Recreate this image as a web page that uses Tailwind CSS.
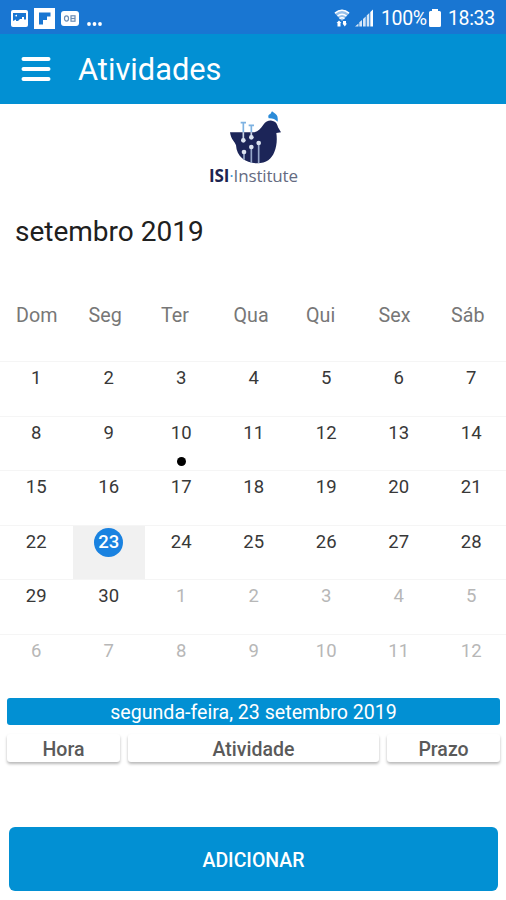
<!DOCTYPE html>
<html lang="pt">
<head>
<meta charset="utf-8">
<title>Atividades</title>
<script src="https://cdn.jsdelivr.net/npm/@tailwindcss/browser@4"></script>
</head>
<body class="w-[506px] h-[900px] overflow-hidden bg-white font-[Roboto,sans-serif] flex flex-col">
<div class="h-[34px] shrink-0 bg-[#1976d2] flex items-center justify-between pl-[11px] pr-[12px] text-white pt-[2px]">
  <div class="flex items-center">
    <svg class="w-[17px] h-[17px]" viewBox="0 0 17 17"><rect width="17" height="17" rx="2" fill="#fff"/><path d="M2 3h13v6.500h-2V7h-2v2H9L7 11H5V9.500L2 11z" fill="#1976d2"/><path d="M3.500 6L6 4.500v2z" fill="#fff"/></svg>
    <svg class="w-[21px] h-[21px] ml-[6px]" viewBox="0 0 21 21"><rect width="21" height="21" fill="#fff"/><path d="M5 4.500h11.500v4H13V12H9v4.500H5z" fill="#1976d2"/></svg>
    <svg class="w-[18px] h-[15px] ml-[6px]" viewBox="0 0 18 15"><rect width="18" height="15" rx="3" fill="#fff"/><g fill="none" stroke="#6b8db5" stroke-width="1.200"><ellipse cx="5.500" cy="7.500" rx="2" ry="2.600"/><rect x="10" y="4.800" width="4" height="5.400"/><path d="M10 7.500h4"/></g></svg>
    <svg class="w-[16px] h-[4px] ml-[8px] mt-[12px]" viewBox="0 0 16 4"><g fill="#fff"><circle cx="2" cy="2" r="1.900"/><circle cx="7.500" cy="2" r="1.900"/><circle cx="13" cy="2" r="1.900"/></g></svg>
  </div>
  <div class="flex items-center">
    <svg class="w-[16px] h-[18px]" viewBox="0 0 16 18"><path d="M0.500 4Q8-2.500 15.500 4L8 12z" fill="#fff" fill-opacity=".55"/><path d="M1 4.200Q8-1.500 15 4.200M3.500 7Q8 3.500 12.500 7M5.500 9.600Q8 8 10.500 9.600" fill="none" stroke="#fff" stroke-width="1.500"/><path d="M5 11.500l2.500 2.500H6.500v3.500h-3V14H2.500zM9 12h3v2.500h1L10.800 17.500 8.500 14.500H9z" fill="#fff"/></svg>
    <svg class="w-[19px] h-[18px] ml-[5px]" viewBox="0 0 19 18"><path d="M0 17.500l3.500-3v3zM4.300 17.500v-4.200l2.700-2.300v6.500zM8 17.500v-7.500l2.700-2.500v10zM11.700 17.500V6.500l2.600-2.500v13.500z" fill="#fff" fill-opacity=".82"/><path d="M15.300 17.500V3L18 .5v17z" fill="#fff"/></svg>
    <span class="w-[44px] ml-[7px] text-[19.500px] leading-[24px] tracking-[-0.350px] whitespace-nowrap relative top-[1px]">100%</span>
    <svg class="w-[12px] h-[18px] ml-[4px]" viewBox="0 0 12 18"><path d="M3 0h6v2h1.500Q12 2 12 3.500v13q0 1.500-1.500 1.500h-9Q0 18 0 16.500v-13Q0 2 1.500 2H3z" fill="#fff"/></svg>
    <span class="w-[46px] ml-[7px] text-[19.500px] leading-[24px] tracking-[-0.350px] whitespace-nowrap relative top-[1px]">18:33</span>
  </div>
</div>
<div class="h-[70px] shrink-0 bg-[#0290d3] flex items-center pl-[21px] text-white">
  <svg class="w-[30px] h-[26px] shrink-0" viewBox="0 0 30 26"><path d="M2.500 3h25M2.500 13h25M2.500 23h25" stroke="#fff" stroke-width="4" stroke-linecap="round"/></svg>
  <h1 class="ml-[27px] mt-[1px] text-[30.800px] leading-[36px]">Atividades</h1>
</div>
<div class="h-[82px] shrink-0 flex flex-col items-center pt-[4px]">
  <svg class="w-[60px] h-[60px] ml-[4px] shrink-0" viewBox="0 0 180 180">
    <path d="M15 73H88C100 70 108 60 115 50C122 41 130 37 140 38C151 39 157 47 159 58L168 73L154 75C157 95 155 115 148 132C140 152 125 166 96 166C62 166 35 146 33 112C30 102 18 95 15 73Z" fill="#1c2558"/>
    <path d="M131 31Q127 20 136 18L141 10L151 17Q160 22 158 41Q147 30 131 31Z" fill="#2b8bd8"/>
    <path d="M55 45V73M79 52V73M47 44H63M71 52H87" stroke="#7db2e2" stroke-width="5"/>
    <path d="M55 73V96M79 73V86" stroke="#c9d4e7" stroke-width="5"/>
    <path d="M57 155V132M79 165V116M101 166V106" stroke="#95a7c8" stroke-width="5"/>
    <g fill="#dbe3f0"><circle cx="55" cy="97" r="7"/><circle cx="79" cy="88" r="7"/><circle cx="57" cy="132" r="7"/><circle cx="79" cy="117" r="7"/><circle cx="101" cy="105" r="7"/></g>
  </svg>
  <div class="mt-[-2px] text-[17px] leading-[20px] font-[Open_Sans,sans-serif] whitespace-nowrap text-[#646b81] tracking-[-0.150px] pl-[1px]"><span class="font-bold text-[#1c2350]">ISI</span><span class="text-[#3c98d9]">·</span>Institute</div>
</div>
<h2 class="h-[90px] shrink-0 pl-[15px] pt-[29px] text-[28px] leading-[34px] text-[#202020]">setembro 2019</h2>
<div class="w-[507.500px] h-[85px] shrink-0 grid grid-cols-7 pt-[27px] text-[19.700px] leading-[25px] text-[#777]">
  <span class="pl-[16px]">Dom</span><span class="pl-[16px]">Seg</span><span class="pl-[16px]">Ter</span><span class="pl-[16px]">Qua</span><span class="pl-[16px]">Qui</span><span class="pl-[16px]">Sex</span><span class="pl-[16px]">Sáb</span>
</div>
<div id="days" class="w-[507.500px] h-[327px] shrink-0 grid grid-cols-7 grid-rows-6 text-[18.500px] leading-[22px] tracking-[0.100px]"></div>
<div class="px-[7px] pt-[10px] shrink-0">
  <div class="h-[27px] w-[493px] rounded-[3px] bg-[#0290d3] text-white text-[19.600px] leading-[30px] text-center">segunda-feira, 23 setembro 2019</div>
  <div class="mt-[9px] flex gap-[8px] w-[493px] text-[19.500px] leading-[31px] font-medium text-[#5a5a5a] text-center">
    <div class="w-[113px] h-[28px] rounded-[3px] shadow-[0_2px_3px_rgba(0,0,0,0.28)]">Hora</div>
    <div class="w-[251px] h-[28px] rounded-[3px] shadow-[0_2px_3px_rgba(0,0,0,0.28)]">Atividade</div>
    <div class="w-[113px] h-[28px] rounded-[3px] shadow-[0_2px_3px_rgba(0,0,0,0.28)]">Prazo</div>
  </div>
</div>
<button class="mt-[65px] ml-[9px] w-[489px] h-[64px] shrink-0 rounded-[6px] bg-[#0290d3] text-white text-[19.500px] leading-[24px] pt-[3px] font-medium">ADICIONAR</button>
<script>
const grid = document.getElementById('days');
for (let i = 0; i < 42; i++) {
  const n = i < 30 ? i + 1 : i - 29;
  const cell = document.createElement('div');
  cell.className = 'relative border-t border-[#f5f5f5] text-center pt-[5px] ' + (i === 22 ? 'bg-[#f1f1f1] text-white' : i < 30 ? 'text-[#383838]' : 'text-[#b7b7b7]');
  const label = document.createElement('span');
  label.className = i === 22 ? 'block mx-auto mt-[-3px] w-[29px] h-[29px] rounded-full bg-[#1a82e0] leading-[29px] font-medium' : 'block';
  label.textContent = n;
  cell.append(label);
  if (i === 9) {
    const dot = document.createElement('i');
    dot.className = 'absolute left-1/2 ml-[-4px] top-[40px] w-[9px] h-[9px] rounded-full bg-black';
    cell.append(dot);
  }
  grid.append(cell);
}
</script>
</body>
</html>
